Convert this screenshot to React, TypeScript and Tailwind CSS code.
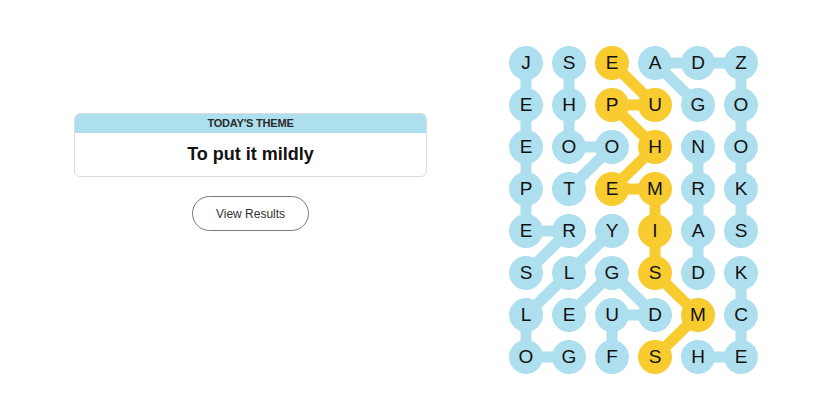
import React from "react";

const ROWS = [
  "JSEADZ",
  "EHPUGO",
  "EOOHNO",
  "PTEMRK",
  "ERYIAS",
  "SLGSDK",
  "LEUDMC",
  "OGFSHE",
];

type P = [number, number];

const BLUE_PATHS: P[][] = [
  [[0, 0], [1, 0], [2, 0], [3, 0], [4, 0], [4, 1], [5, 0]],
  [[0, 1], [1, 1], [2, 1], [2, 2], [3, 1]],
  [[1, 4], [0, 3], [0, 4], [0, 5], [1, 5], [2, 5], [3, 5], [4, 5]],
  [[5, 4], [4, 4], [3, 4], [2, 4]],
  [[7, 4], [7, 5], [6, 5], [5, 5]],
  [[7, 1], [7, 0], [6, 0], [5, 1], [4, 2]],
  [[7, 2], [6, 2], [6, 3], [5, 2], [6, 1]],
];

const YELLOW_PATH: P[] = [
  [0, 2], [1, 3], [1, 2], [2, 3], [3, 2], [3, 3], [4, 3], [5, 3], [6, 4], [7, 3],
];

const yellowSet = new Set(YELLOW_PATH.map(([r, c]) => `${r}-${c}`));

const cx = (c: number) => 17 + 43 * c;
const cy = (r: number) => 17 + 42 * r;

const toPoints = (p: P[]) => p.map(([r, c]) => `${cx(c)},${cy(r)}`).join(" ");

export default function App() {
  return (
    <div className="w-[825px] h-[413px] bg-white flex" style={{ fontFamily: "'Liberation Sans', Arial, sans-serif" }}>
      <div className="w-[501px] flex flex-col items-center pt-[113px]">
        <div className="w-[353px] rounded-[6px] border border-[#dcdcdc] overflow-hidden">
          <div className="h-[19px] bg-[#aedfee] flex items-center justify-center text-[11px] font-bold tracking-[-0.2px] text-[#2a2a2a]">
            TODAY'S THEME
          </div>
          <div className="h-[43px] flex items-center justify-center text-[18px] font-bold text-[#121212]">
            To put it mildly
          </div>
        </div>
        <button className="mt-[19px] w-[117px] h-[35px] rounded-full border border-[#7a7a7a] bg-white text-[12px] text-[#333]">
          View Results
        </button>
      </div>
      <div className="pt-[46px] pl-[8px]">
        <div className="relative w-[249px] h-[328px]">
          <svg className="absolute inset-0" width="249" height="328" viewBox="0 0 249 328">
            {BLUE_PATHS.map((p, i) => (
              <polyline key={i} points={toPoints(p)} fill="none" stroke="#aedfee" strokeWidth="11" strokeLinejoin="round" strokeLinecap="round" />
            ))}
            <polyline points={toPoints(YELLOW_PATH)} fill="none" stroke="#f8cb2e" strokeWidth="11" strokeLinejoin="round" strokeLinecap="round" />
          </svg>
          <div className="relative grid grid-cols-[repeat(6,34px)] grid-rows-[repeat(8,34px)] gap-x-[9px] gap-y-[8px]">
            {ROWS.map((row, r) =>
              row.split("").map((ch, c) => (
                <div
                  key={`${r}-${c}`}
                  className={`w-[34px] h-[34px] rounded-full flex items-center justify-center text-[19px] text-[#121212] ${
                    yellowSet.has(`${r}-${c}`) ? "bg-[#f8cb2e]" : "bg-[#aedfee]"
                  }`}
                >
                  {ch}
                </div>
              ))
            )}
          </div>
        </div>
      </div>
    </div>
  );
}
